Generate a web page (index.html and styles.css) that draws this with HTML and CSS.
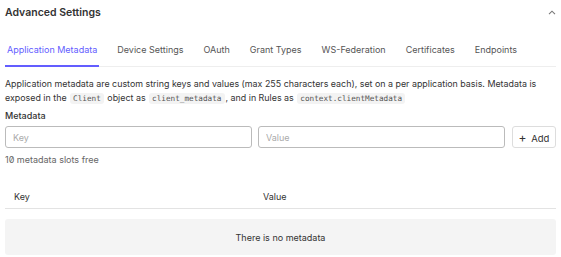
FILE: index.html
```html
<!DOCTYPE html>
<html lang="en">

<head>
    <meta charset="UTF-8">
    <meta name="viewport" content="width=device-width, initial-scale=1.0">
    <title>Advanced Settings</title>
    <link rel="stylesheet" href="styles.css">
</head>

<body>
    <div class="panel">
        <div class="panel-header">
            <h2>Advanced Settings</h2>
            <svg class="chevron" width="8" height="5" viewBox="0 0 8 5">
                <path d="M1 4.2 L4 1.2 L7 4.2" fill="none" stroke="#777" stroke-width="1.1" />
            </svg>
        </div>

        <nav class="tabs">
            <a class="tab active">Application Metadata</a>
            <a class="tab">Device Settings</a>
            <a class="tab">OAuth</a>
            <a class="tab">Grant Types</a>
            <a class="tab">WS-Federation</a>
            <a class="tab">Certificates</a>
            <a class="tab">Endpoints</a>
        </nav>

        <p class="intro">
            Application metadata are custom string keys and values (max 255 characters each), set on a per application basis. Metadata is
            exposed in the <code>Client</code> object as <code>client_metadata</code>, and in Rules as <code>context.clientMetadata</code>
        </p>

        <label class="field-label">Metadata</label>
        <div class="add-row">
            <input type="text" placeholder="Key">
            <input type="text" placeholder="Value">
            <button class="add-btn"><span class="plus">+</span> Add</button>
        </div>
        <p class="slots">10 metadata slots free</p>

        <div class="table-head">
            <span class="col-key">Key</span>
            <span class="col-value">Value</span>
        </div>
        <div class="empty">There is no metadata</div>
    </div>
</body>

</html>
```

FILE: styles.css
```css
body {
    font-family: Inter, "Noto Sans", sans-serif;
    margin: 0;
    padding: 0 5px;
    background-color: white;
    color: #333;
}

.panel {
    width: 551px;
}

.panel-header {
    display: flex;
    justify-content: space-between;
    align-items: center;
    height: 24px;
}

.panel-header h2 {
    margin: 0;
    font-size: 10.5px;
    font-weight: 600;
    color: #333;
}

.tabs {
    display: flex;
    gap: 16px;
    margin-top: 15px;
    border-bottom: 1px solid #eee;
}

.tab {
    white-space: nowrap;
    font-size: 9px;
    color: #555;
    padding: 5px 2px 10px;
    border-bottom: 2px solid transparent;
    margin-bottom: -1px;
}

.tab.active {
    color: #635dff;
    border-bottom-color: #635dff;
}

.intro {
    margin: 10px 0 0;
    font-size: 8.9px;
    line-height: 14px;
    color: #333;
}

code {
    display: inline-block;
    font-family: "DejaVu Sans Mono", monospace;
    font-size: 7.7px;
    line-height: 11px;
    background-color: #f3f3f3;
    border-radius: 3px;
    padding: 0 3px;
    margin: 0 1px;
    color: #555;
}

.field-label {
    display: block;
    margin-top: 5px;
    font-size: 9px;
    font-weight: 500;
    color: #333;
}

.add-row {
    display: flex;
    gap: 6px;
    margin-top: 5px;
}

.add-row input {
    flex: 1;
    height: 22px;
    box-sizing: border-box;
    border: 1px solid #bbb;
    border-radius: 3px;
    padding: 0 7px;
    font-family: inherit;
    font-size: 9px;
}

.add-row input::placeholder {
    color: #aaa;
}

.add-btn {
    height: 22px;
    width: 44px;
    margin-left: 1px;
    border: 1px solid #ddd;
    border-radius: 3px;
    background: white;
    font-family: inherit;
    font-size: 9.5px;
    color: #333;
    padding: 0;
}

.plus {
    font-size: 12px;
    margin-right: 2px;
}

.slots {
    margin: 6px 0 0;
    font-size: 9px;
    color: #666;
    font-feature-settings: "zero";
}

.table-head {
    display: flex;
    margin-top: 26px;
    padding: 0 9px 6px;
    border-bottom: 1px solid #e3e3e3;
    font-size: 9px;
    color: #333;
}

.col-key {
    width: 249px;
}

.empty {
    margin-top: 10px;
    background-color: #f4f4f4;
    border-radius: 3px;
    height: 36px;
    display: flex;
    align-items: center;
    justify-content: center;
    font-size: 9px;
    color: #333;
}
```
